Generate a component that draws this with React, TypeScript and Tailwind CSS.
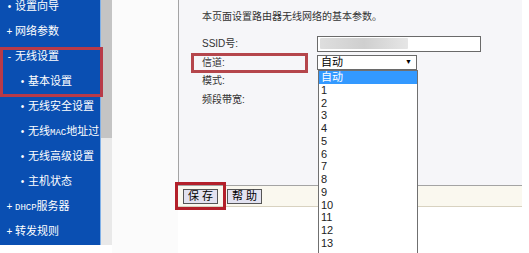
import React from 'react';

const menu = [
  { label: '设置向导', mark: '•', sub: false },
  { label: '网络参数', mark: '+', sub: false },
  { label: '无线设置', mark: '-', sub: false },
  { label: '基本设置', mark: '•', sub: true },
  { label: '无线安全设置', mark: '•', sub: true },
  { label: ['无线', 'MAC', '地址过滤'], mark: '•', sub: true },
  { label: '无线高级设置', mark: '•', sub: true },
  { label: '主机状态', mark: '•', sub: true },
  { label: ['', 'DHCP', '服务器'], mark: '+', sub: false },
  { label: '转发规则', mark: '+', sub: false },
];

const channels = ['1', '2', '3', '4', '5', '6', '7', '8', '9', '10', '11', '12', '13'];

const font = "font-['Liberation_Sans','Noto_Sans_CJK_SC',sans-serif]";

const App: React.FC = () => {
  return (
    <div className={`relative w-[529px] h-[253px] bg-white flex overflow-hidden ${font}`}>
      {/* Sidebar */}
      <aside className="w-[101px] h-[245px] bg-[#0a4fb2] overflow-hidden shrink-0 border-r border-[#7fb0e8]">
        <div className="-mt-[6px] flex flex-col">
          {menu.map((item, i) => (
            <div
              key={i}
              className={`h-[25px] flex items-center whitespace-nowrap text-white text-[11px] ${item.sub ? 'pl-[18px]' : 'pl-[5px]'}`}
            >
              <span className="w-[9px] shrink-0 text-center text-[10px] leading-none">{item.mark}</span>
              <span className="ml-[1px] shrink-0">
                {Array.isArray(item.label) ? (
                  <>
                    {item.label[0]}
                    <span className="text-[9px] font-['Liberation_Mono',monospace]">{item.label[1]}</span>
                    {item.label[2]}
                  </>
                ) : (
                  item.label
                )}
              </span>
            </div>
          ))}
        </div>
      </aside>

      {/* Scrollbar */}
      <div className="w-[11px] h-[245px] flex flex-col shrink-0">
        <div className="h-[138px] bg-[#c4c4c4]" />
        <div className="flex-1 bg-[#e9e9e9]" />
      </div>

      {/* Gap */}
      <div className="w-[66px] h-full bg-[#fbfbfb] shrink-0" />

      {/* Content panel */}
      <main className="w-[344px] shrink-0 flex flex-col">
        <div className="h-[186px] bg-[#f6f6f9] border-l border-[#a4a4a4] border-b pl-[23px] text-[10px] text-[#333]">
          <p className="pt-[9px] h-[34px]">本页面设置路由器无线网络的基本参数。</p>
          <div className="flex flex-col">
            <div className="h-[19px] flex items-center">
              <span className="w-[115px]">SSID号:</span>
              <div className="w-[164px] h-[16px] border border-[#6a6a6a] bg-white flex items-center px-[2px]">
                <div className="w-[88px] h-[11px] bg-gradient-to-r from-[#dedede] via-[#cfcfcf] to-[#e6e6e6] rounded-[1px]" />
              </div>
            </div>
            <div className="h-[18px] flex items-center">
              <span className="w-[115px]">信道:</span>
              <div className="w-[100px] h-[15px] border border-[#6a6a6a] bg-white flex items-center justify-between pl-[3px] pr-[4px] text-[11px] text-black">
                <span>自动</span>
                <span className="text-[7px]">▼</span>
              </div>
            </div>
            <div className="h-[19px] flex items-center">
              <span className="w-[115px]">模式:</span>
            </div>
            <div className="h-[19px] flex items-center">
              <span className="w-[115px]">频段带宽:</span>
            </div>
          </div>
        </div>
        <div className="h-[21px] bg-[#faf8ef] border-b border-[#d8d2c0] flex items-center pl-[5px] gap-[9px] text-[11px] text-black">
          <button className="w-[35px] h-[15px] bg-[#e2e2f0] border border-[#555] flex items-center justify-center pl-[3px] tracking-[3px] leading-none">
            保存
          </button>
          <button className="w-[35px] h-[15px] bg-[#e2e2f0] border border-[#555] flex items-center justify-center pl-[3px] tracking-[3px] leading-none">
            帮助
          </button>
        </div>
      </main>

      {/* Open channel list */}
      <div className="absolute left-[318px] top-[70px] w-[100px] h-[200px] bg-white border border-[#707070] text-[11px] text-[#222]">
        <div className="h-[12.75px] bg-[#3399ff] text-white text-[11px] leading-[12.75px] pl-[2px]">自动</div>
        {channels.map((c) => (
          <div key={c} className="h-[12.75px] leading-[12.75px] pl-[2px]">
            {c}
          </div>
        ))}
      </div>

      {/* Highlight boxes */}
      <div className="absolute left-0 top-[47px] w-[103px] h-[50px] border-[3px] border-[#b83a48]" />
      <div className="absolute left-[191px] top-[53px] w-[117px] h-[20px] border-[3px] border-[#b5464c]" />
      <div className="absolute left-[175px] top-[182px] w-[51px] h-[28px] border-[3px] border-[#b3202a]" />
    </div>
  );
};

export default App;
